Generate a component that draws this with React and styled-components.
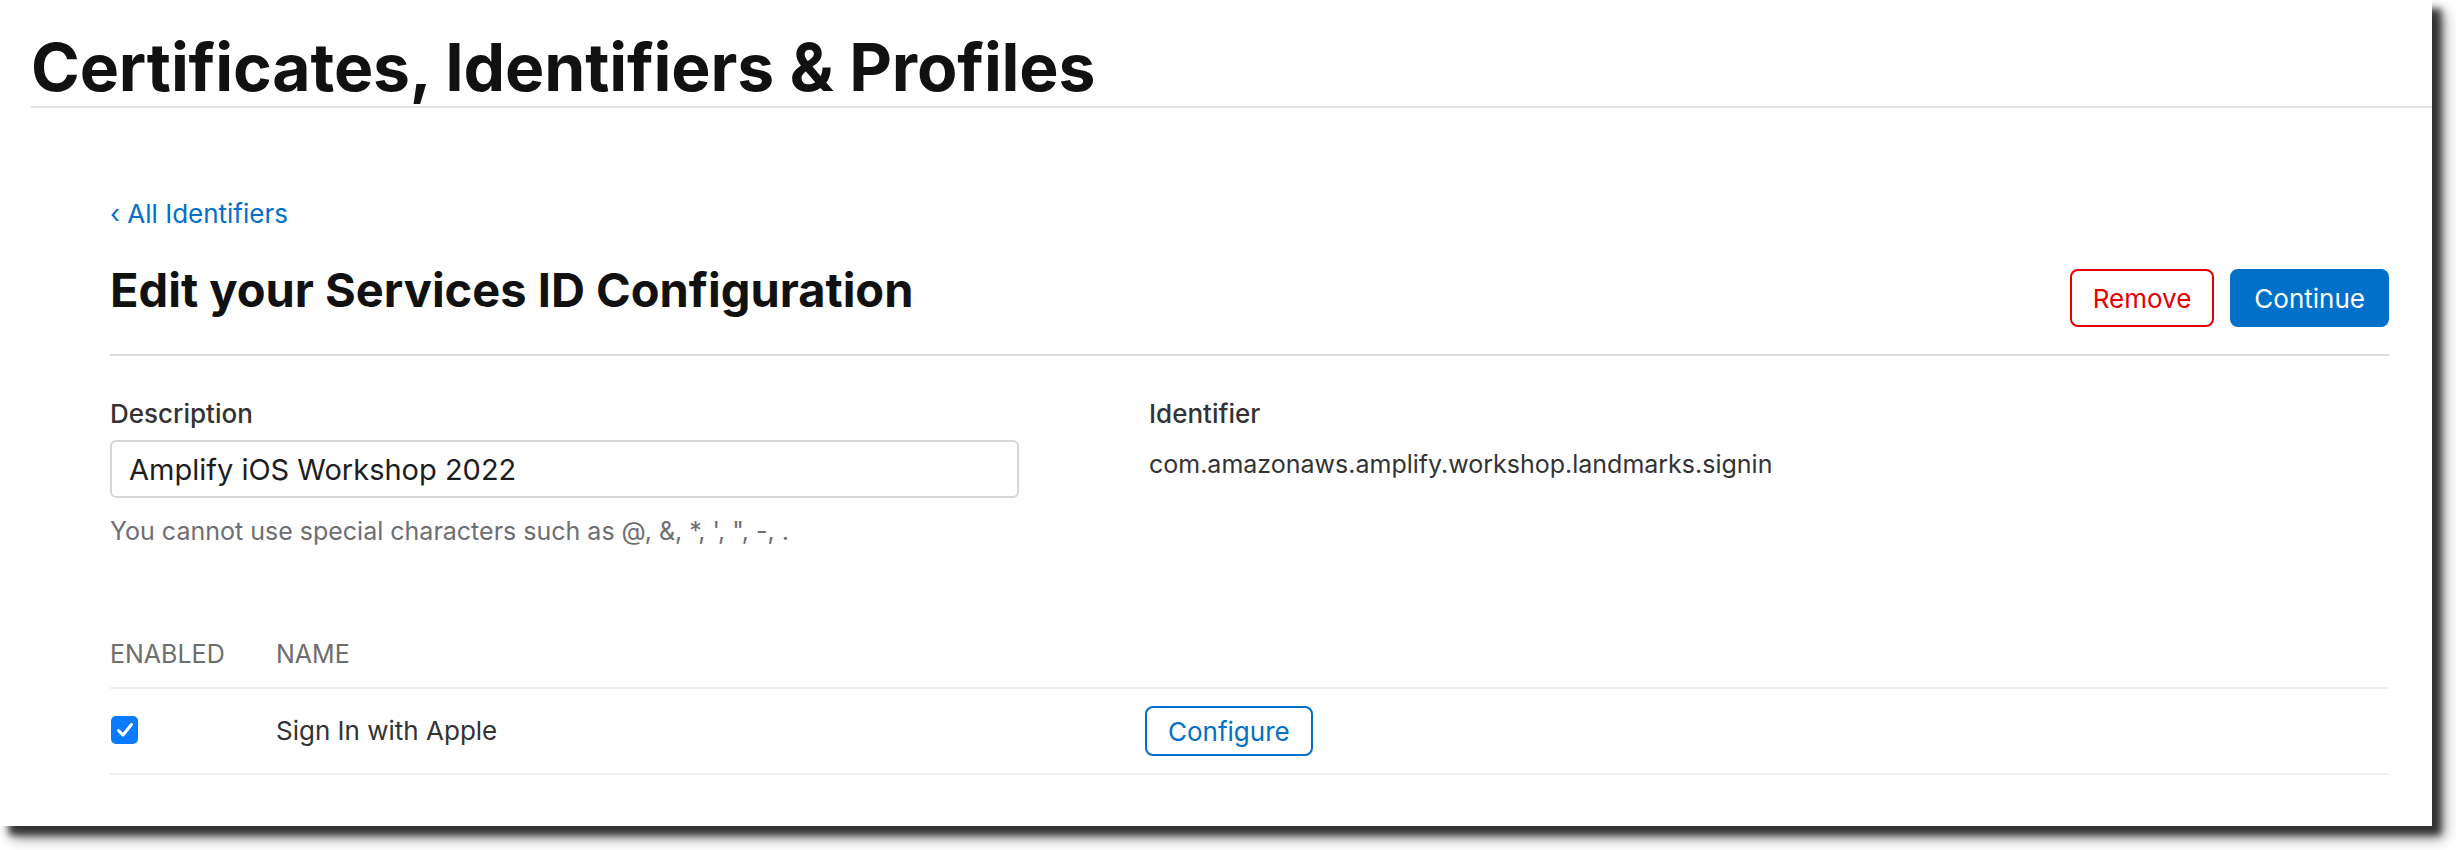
import React from "react"
import styled, { createGlobalStyle } from 'styled-components'

const GlobalStyle = createGlobalStyle`
    html, body {
        margin: 0;
        padding: 0;
        background: #ffffff;
    }
    body {
        font-family: Inter, 'Liberation Sans', sans-serif;
        color: #1d1d1f;
    }
`;

const Page = styled.div`
    width: 2456px;
    height: 850px;
    background: #ffffff;
    overflow: hidden;
`;

const Sheet = styled.div`
    width: 2432px;
    height: 826px;
    background: #ffffff;
    box-shadow: 9px 9px 7px rgba(30,30,30,.85), 12px 12px 14px rgba(0,0,0,.4);
    overflow: hidden;
`;

const Header = styled.header`
    margin-left: 31px;
    padding-top: 28px;
    border-bottom: 2px solid #e4e4e4;
`;

const Title = styled.h1`
    margin: 0;
    font-size: 66px;
    line-height: 78px;
    font-weight: 700;
    letter-spacing: -0.15px;
    color: #111111;
`;

const Content = styled.main`
    padding: 91px 43px 0 110px;
`;

const BackLink = styled.a`
    display: block;
    font-size: 26px;
    line-height: 30px;
    color: #0070c9;
    text-decoration: none;
`;

const HeadingRow = styled.div`
    display: flex;
    justify-content: space-between;
    align-items: flex-start;
    margin-top: 33px;
    padding-bottom: 27px;
    border-bottom: 2px solid #dcdcdc;
`;

const Heading = styled.h2`
    margin: 0;
    font-size: 47px;
    line-height: 56px;
    font-weight: 700;
    color: #111111;
`;

const Actions = styled.div`
    display: flex;
    gap: 16px;
    margin-top: 7px;
`;

const Button = styled.button`
    height: 58px;
    padding: 0 ${props => props.primary ? 22 : 21}px;
    font-family: inherit;
    font-size: 26px;
    border-radius: 8px;
    border: 2px solid ${props => props.tone};
    background: ${props => props.primary ? props.tone : '#ffffff'};
    color: ${props => props.primary ? '#ffffff' : props.tone};
    cursor: pointer;
`;

const FormGrid = styled.div`
    display: grid;
    grid-template-columns: 909px 1fr;
    column-gap: 130px;
    margin-top: 43px;
`;

const Field = styled.div`
    display: flex;
    flex-flow: column;
`;

const Label = styled.label`
    font-size: 26px;
    line-height: 30px;
    font-weight: 500;
    color: #333333;
`;

const TextInput = styled.input`
    box-sizing: border-box;
    width: 100%;
    height: 58px;
    margin-top: 11px;
    padding: 0 17px;
    font-family: inherit;
    font-size: 29px;
    color: #1d1d1f;
    border: 2px solid #d6d6d6;
    border-radius: 6px;
    outline: none;
`;

const Hint = styled.p`
    margin: 18px 0 0;
    font-size: 25px;
    line-height: 30px;
    color: #6e6e73;
`;

const Value = styled.div`
    margin-top: 20px;
    font-size: 25px;
    line-height: 30px;
    color: #333333;
`;

const Table = styled.div`
    margin-top: 93px;
`;

const Row = styled.div`
    display: grid;
    grid-template-columns: 166px 869px 1fr;
    align-items: center;
    height: ${props => props.head ? 'auto' : '84px'};
    padding-bottom: ${props => props.head ? '18px' : '0'};
    border-bottom: 2px solid #f0f0f0;
`;

const HeadCell = styled.div`
    font-size: 25px;
    line-height: 30px;
    color: #6e6e6e;
    text-transform: uppercase;
`;

const Cell = styled.div`
    font-size: 26px;
    line-height: 30px;
    color: #333333;
    display: flex;
    align-items: center;
`;

const Checkbox = styled.span`
    display: inline-flex;
    align-items: center;
    justify-content: center;
    width: 27px;
    height: 28px;
    margin-left: 1px;
    margin-top: -2px;
    border-radius: 5px;
    background: #0a7aff;
`;

const ConfigureButton = styled.button`
    height: 50px;
    padding: 0 21px;
    font-family: inherit;
    font-size: 26px;
    color: #0070c9;
    background: #ffffff;
    border: 2px solid #0070c9;
    border-radius: 8px;
    cursor: pointer;
`;

const CheckMark = () => (
    <svg width="18" height="16" viewBox="0 0 18 16">
        <path d="M2.5 8.5 L7 13 L15.5 2.5" fill="none" stroke="#ffffff" strokeWidth="3" strokeLinecap="round" strokeLinejoin="round" />
    </svg>
)

const App = () => {
    return (
        <Page>
            <GlobalStyle />
            <Sheet>
                <Header>
                    <Title>Certificates, Identifiers &amp; Profiles</Title>
                </Header>
                <Content>
                    <BackLink href="#">‹ All Identifiers</BackLink>
                    <HeadingRow>
                        <Heading>Edit your Services ID Configuration</Heading>
                        <Actions>
                            <Button tone="#e30000">Remove</Button>
                            <Button tone="#0070c9" primary>Continue</Button>
                        </Actions>
                    </HeadingRow>
                    <FormGrid>
                        <Field>
                            <Label>Description</Label>
                            <TextInput defaultValue="Amplify iOS Workshop 2022" />
                            <Hint>You cannot use special characters such as @, &amp;, *, ', ", -, .</Hint>
                        </Field>
                        <Field>
                            <Label>Identifier</Label>
                            <Value>com.amazonaws.amplify.workshop.landmarks.signin</Value>
                        </Field>
                    </FormGrid>
                    <Table>
                        <Row head>
                            <HeadCell>Enabled</HeadCell>
                            <HeadCell>Name</HeadCell>
                            <HeadCell />
                        </Row>
                        <Row>
                            <Cell><Checkbox><CheckMark /></Checkbox></Cell>
                            <Cell>Sign In with Apple</Cell>
                            <Cell><ConfigureButton>Configure</ConfigureButton></Cell>
                        </Row>
                    </Table>
                </Content>
            </Sheet>
        </Page>
    )
}

export default App;
